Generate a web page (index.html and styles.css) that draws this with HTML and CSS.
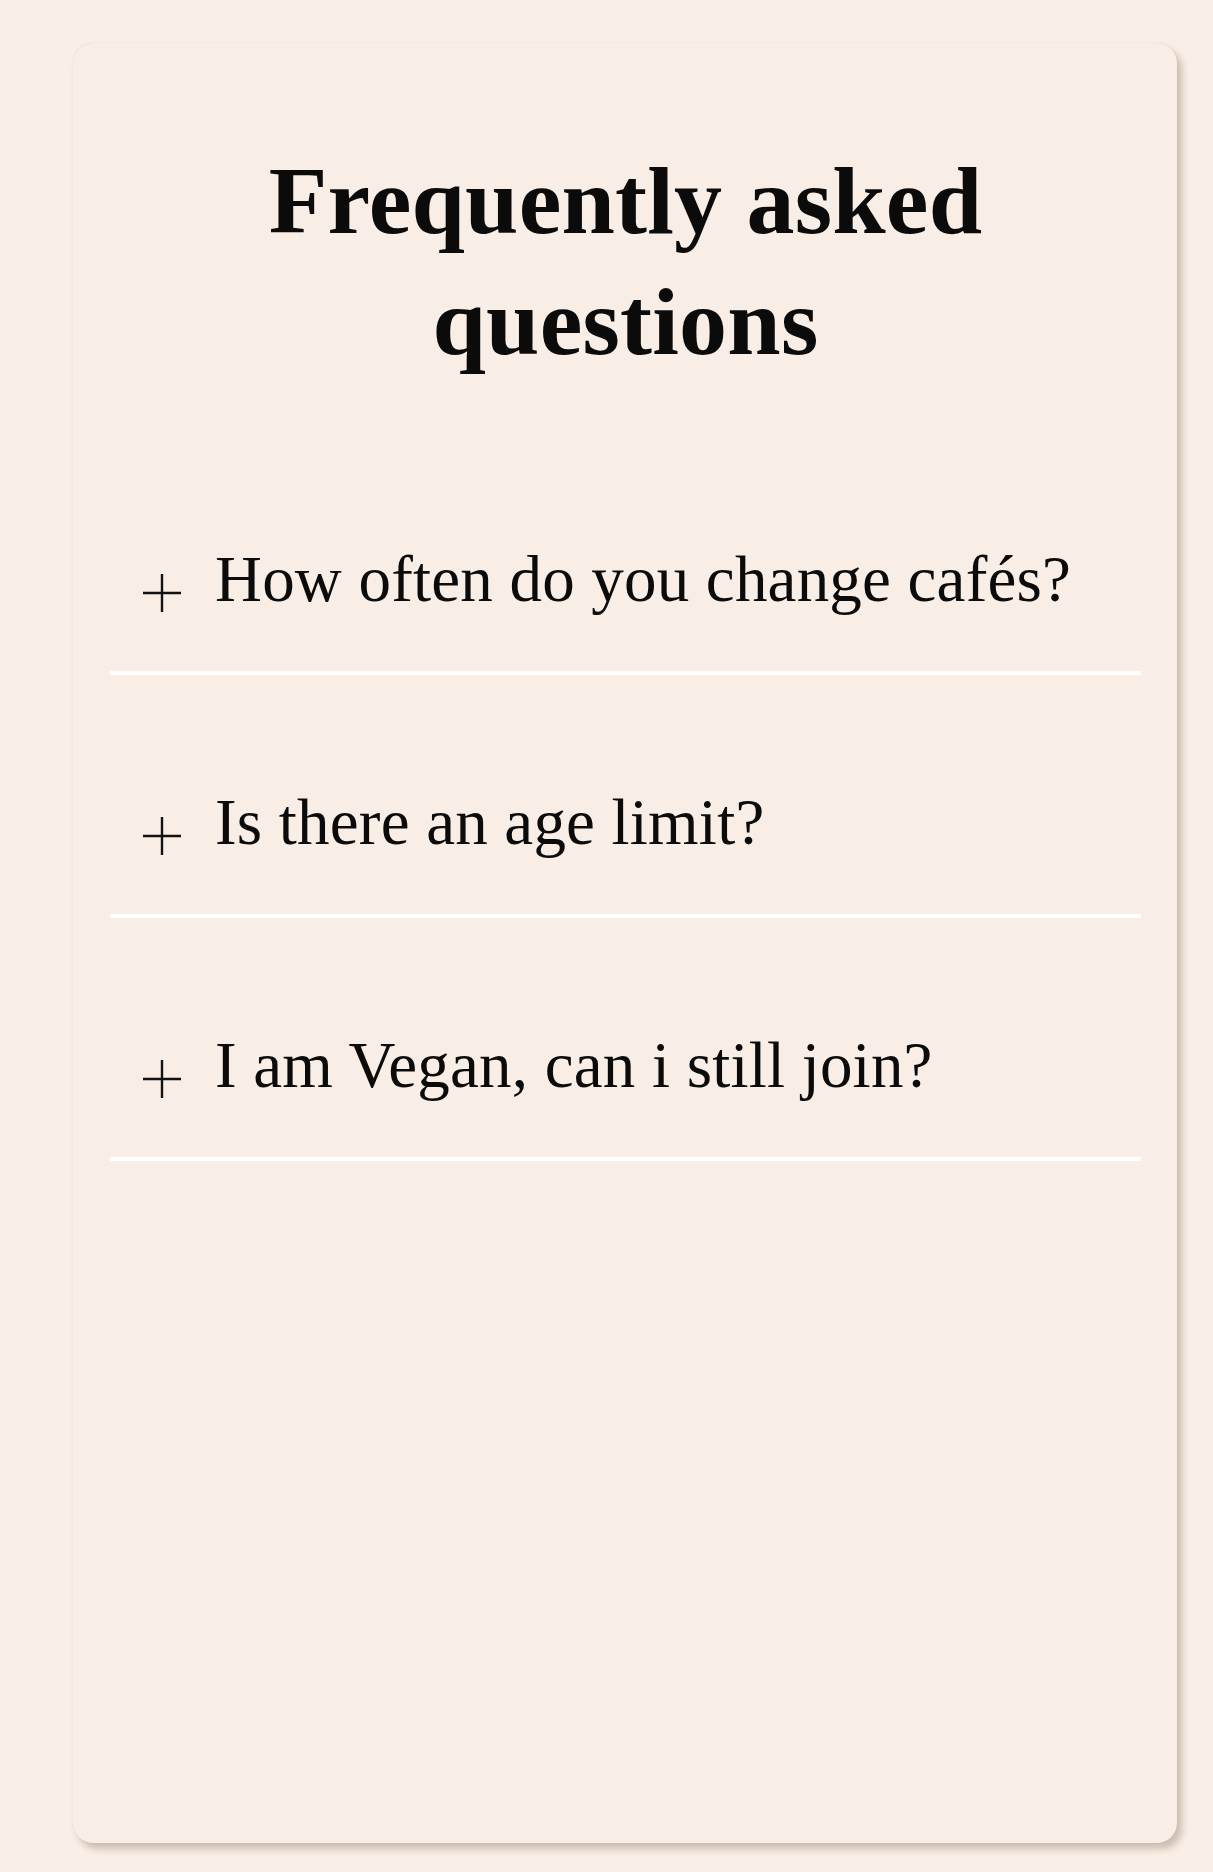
FILE: index.html
```html
<!DOCTYPE html>
<html lang="en">
<head>
<meta charset="utf-8">
<title>Frequently asked questions</title>
<link rel="stylesheet" href="styles.css">
</head>
<body>
<section class="card">
  <h1 class="title">Frequently asked questions</h1>
  <ul class="faq">
    <li class="item">
      <svg class="plus" viewBox="0 0 38 38" width="38" height="38" aria-hidden="true"><path d="M0 19H38M19 0V38" stroke="#111" stroke-width="2.4" fill="none"/></svg>
      <span class="q">How often do you change cafés?</span>
    </li>
    <li class="item">
      <svg class="plus" viewBox="0 0 38 38" width="38" height="38" aria-hidden="true"><path d="M0 19H38M19 0V38" stroke="#111" stroke-width="2.4" fill="none"/></svg>
      <span class="q">Is there an age limit?</span>
    </li>
    <li class="item">
      <svg class="plus" viewBox="0 0 38 38" width="38" height="38" aria-hidden="true"><path d="M0 19H38M19 0V38" stroke="#111" stroke-width="2.4" fill="none"/></svg>
      <span class="q">I am Vegan, can i still join?</span>
    </li>
  </ul>
</section>
</body>
</html>
```
FILE: styles.css
```css
html, body {
  margin: 0;
  background: #f9efe6;
}
body {
  padding: 43px 36px 29px 73px;
  font-family: "Liberation Serif", "Times New Roman", serif;
  color: #0b0b0b;
}
.card {
  box-sizing: border-box;
  width: 1104px;
  height: 1800px;
  padding: 97px 36px 0 37px;
  background: #f8eee5;
  border-radius: 20px;
  box-shadow: 0 0 1px rgba(120, 100, 80, 0.25), 5px 6px 7px rgba(150, 130, 110, 0.45);
}
.title {
  margin: 0 0 50px;
  text-align: center;
  font-size: 96px;
  line-height: 121px;
  font-weight: 700;
  letter-spacing: 0.2px;
}
.faq {
  list-style: none;
  margin: 0;
  padding: 0;
}
.item {
  display: flex;
  align-items: flex-start;
  gap: 34px;
  padding: 108px 0 53px 33px;
  border-bottom: 4px solid #ffffff;
}
.plus {
  flex: none;
  margin-top: 34px;
}
.q {
  font-size: 65px;
  line-height: 78px;
  letter-spacing: 0.2px;
}
```
